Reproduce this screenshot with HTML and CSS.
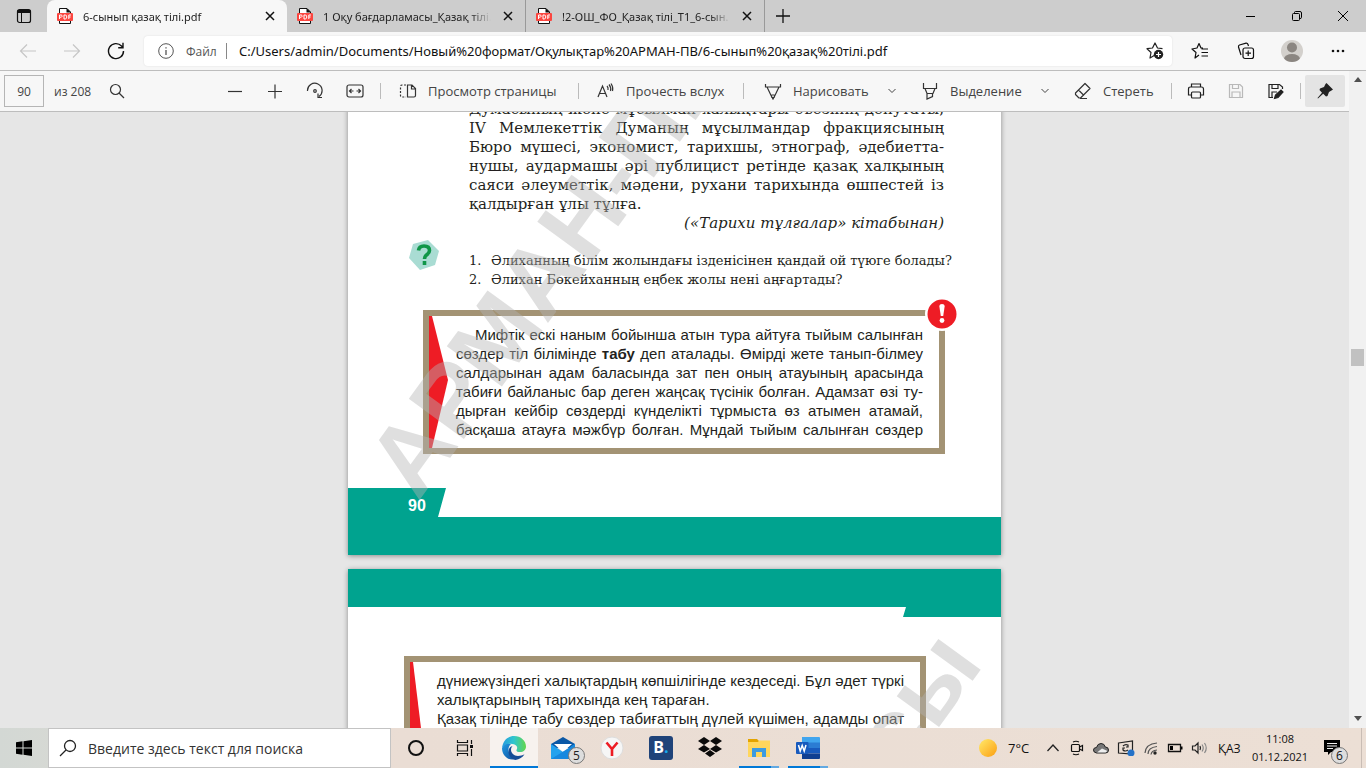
FILE: index.html
```html
<!DOCTYPE html>
<html lang="kk">
<head>
  <meta charset="UTF-8">
  <meta name="viewport" content="width=device-width, initial-scale=1.0">
  <title>6-сынып қазақ тілі.pdf</title>
  <link rel="stylesheet" href="styles.css">
</head>
<body>
  <svg width="0" height="0" class="defs">
    <symbol id="pdf" viewBox="0 0 16 16">
      <path d="M2.500 .5H10L13.500 4V15.500H2.500Z" fill="#fff" stroke="#111"/>
      <path d="M9.500 0V4.500H14Z" fill="#111"/>
      <rect x="0" y="5" width="16" height="8" rx="1" fill="#fb4640"/>
      <path d="M2.500 11V7H4.200Q5.300 7.200 5.200 8.300Q5 9.300 2.800 9.300M7 7V11H8.200Q9.800 10.800 9.800 9Q9.800 7 8.200 7ZM11.800 11V7H14M11.800 9H13.600" fill="none" stroke="#fff"/>
    </symbol>
    <symbol id="x" viewBox="0 0 10 10"><path d="M1 1 9 9M9 1 1 9" stroke="#111" stroke-width="1.500"/></symbol>
    <symbol id="chev" viewBox="0 0 10 10"><path d="M1.500 3 5 6.500 8.500 3" fill="none" stroke="#444"/></symbol>
  </svg>

  <header class="tabs">
    <button class="tab-actions" aria-label="Tab actions">
      <svg width="16" height="16" viewBox="0 0 16 16" fill="none" stroke="#111"><rect x="1.500" y="1.500" width="13" height="13" rx="2" stroke-width="1.200"/><path d="M1.500 3.500H14.500" stroke-width="3"/><path d="M5.500 5V14"/></svg>
    </button>
    <div class="tab active">
      <svg width="16" height="16"><use href="#pdf"/></svg>
      <span class="tab-title">6-сынып қазақ тілі.pdf</span>
      <button class="tab-close" aria-label="Close"><svg width="10" height="10"><use href="#x"/></svg></button>
    </div>
    <div class="tab">
      <svg width="16" height="16"><use href="#pdf"/></svg>
      <span class="tab-title">1 Оқу бағдарламасы_Қазақ тілі.</span>
      <button class="tab-close" aria-label="Close"><svg width="10" height="10"><use href="#x"/></svg></button>
    </div>
    <div class="tab">
      <svg width="16" height="16"><use href="#pdf"/></svg>
      <span class="tab-title">!2-ОШ_ФО_Қазақ тілі_Т1_6-сын.</span>
      <button class="tab-close" aria-label="Close"><svg width="10" height="10"><use href="#x"/></svg></button>
    </div>
    <button class="new-tab" aria-label="New tab"><svg width="14" height="14" viewBox="0 0 14 14"><path d="M7 0V14M0 7H14" stroke="#111" stroke-width="1.300"/></svg></button>
    <div class="window-buttons">
      <button aria-label="Minimize"><svg width="12" height="12" viewBox="0 0 12 12"><path d="M1 6.500H10" stroke="#000"/></svg></button>
      <button aria-label="Restore"><svg width="12" height="12" viewBox="0 0 12 12" fill="none" stroke="#000"><rect x="1.500" y="3.500" width="7" height="7" rx="1"/><path d="M3.500 3V2.500Q3.500 1.500 4.500 1.500H9Q10.500 1.500 10.500 3V7.500Q10.500 8.500 9 8.500"/></svg></button>
      <button aria-label="Close window"><svg width="12" height="12" viewBox="0 0 12 12"><path d="M1 1 11 11M11 1 1 11" stroke="#000"/></svg></button>
    </div>
  </header>

  <nav class="nav">
    <button aria-label="Back"><svg width="18" height="16" viewBox="0 0 18 16" fill="none" stroke="#c6c6c6" stroke-width="1.200"><path d="M17 8H1.500M8 1.500 1.500 8 8 14.500"/></svg></button>
    <button aria-label="Forward"><svg width="18" height="16" viewBox="0 0 18 16" fill="none" stroke="#c6c6c6" stroke-width="1.200"><path d="M1 8H16.500M10 1.500 16.500 8 10 14.500"/></svg></button>
    <button aria-label="Reload"><svg width="18" height="18" viewBox="0 0 18 18" fill="none" stroke="#111" stroke-width="1.400"><path d="M16.500 9A7.500 7.500 0 1 1 14.500 4L16 5.500M16 .8V5.700H11.200"/></svg></button>
    <div class="address">
      <svg width="16" height="16" viewBox="0 0 16 16" fill="none" stroke="#555"><circle cx="8" cy="8" r="7.300"/><path d="M8 7V12M8 4.200V5.600" stroke-width="1.300"/></svg>
      <label for="url">Файл</label>
      <input id="url" type="text" value="C:/Users/admin/Documents/Новый%20формат/Оқулықтар%20АРМАН-ПВ/6-сынып%20қазақ%20тілі.pdf">
      <button aria-label="Add to favorites"><svg width="18" height="18" viewBox="0 0 18 18"><path d="M9 13 4 16 5 10.500 1 6.700 6.500 6 9 1 11.500 6 16.500 6.700" fill="none" stroke="#222" stroke-width="1.200" stroke-linejoin="round"/><circle cx="12.500" cy="12.500" r="4.700" fill="#222"/><path d="M12.500 10V15M10 12.500H15" stroke="#fff" stroke-width="1.200"/></svg></button>
    </div>
    <div class="nav-right">
      <button aria-label="Favorites"><svg width="18" height="18" viewBox="0 0 18 18" fill="none" stroke="#111" stroke-width="1.200" stroke-linejoin="round"><path d="M8 13 4 16 5 10.500 1 7 6 6 8 1.500 10 6H12M10.500 7H17M10.500 10.500H17M10.500 14H17"/></svg></button>
      <button aria-label="Collections"><svg width="18" height="18" viewBox="0 0 18 18" fill="none" stroke="#111" stroke-width="1.200"><rect x="6" y="6" width="10.500" height="10.500" rx="2"/><path d="M11.200 8.500V14M8.500 11.200H14M4 13 1.500 5Q1.200 3.500 2.500 3L9 1.200Q10.500 1 11 2.500L11.500 4"/></svg></button>
      <button aria-label="Profile"><svg width="24" height="24" viewBox="0 0 24 24"><defs><clipPath id="round"><circle cx="12" cy="12" r="11"/></clipPath></defs><circle cx="12" cy="12" r="11" fill="#d3d0cc"/><g fill="#8b8681" clip-path="url(#round)"><circle cx="12" cy="8.500" r="5"/><ellipse cx="12" cy="20" rx="8" ry="5"/></g></svg></button>
      <button aria-label="Menu"><svg width="16" height="4" viewBox="0 0 16 4" fill="#111"><circle cx="3" cy="2" r="1.300"/><circle cx="8" cy="2" r="1.300"/><circle cx="13" cy="2" r="1.300"/></svg></button>
    </div>
  </nav>

  <main class="content">
    <div class="viewer">
      <div class="toolbar">
        <label class="page-label"><input type="text" value="90" aria-label="Page">из 208</label>
        <button class="find" aria-label="Find"><svg width="16" height="16" viewBox="0 0 16 16" fill="none" stroke="#333" stroke-width="1.200"><circle cx="6.500" cy="6.500" r="5"/><path d="M10 10 15 15"/></svg></button>
        <div class="zoom-tools">
          <button aria-label="Zoom out"><svg width="16" height="16" viewBox="0 0 16 16"><path d="M1 8.500H15" stroke="#333" stroke-width="1.200"/></svg></button>
          <button aria-label="Zoom in"><svg width="16" height="16" viewBox="0 0 16 16"><path d="M1 8.500H15M8 1.500V15.500" stroke="#333" stroke-width="1.200"/></svg></button>
          <button aria-label="Rotate"><svg width="18" height="18" viewBox="0 0 18 18" fill="none" stroke="#333" stroke-width="1.200"><path d="M1.500 9A7.300 7.300 0 1 1 13 14.500M16 15.500H12V11.500"/><circle cx="9" cy="9" r="1.300"/></svg></button>
          <button aria-label="Fit to width"><svg width="18" height="16" viewBox="0 0 18 16" fill="none" stroke="#333" stroke-width="1.200"><rect x="1" y="2" width="16" height="12" rx="2"/><path d="M7.500 8H3.500M10.500 8H14.500M5.500 6 3.500 8 5.500 10M12.500 6 14.500 8 12.500 10"/></svg></button>
        </div>
        <i class="sep"></i>
        <button class="tool view"><svg width="18" height="16" viewBox="0 0 18 16" fill="none" stroke="#333" stroke-width="1.200"><path d="M7 2H3Q1.500 2 1.500 3.500V12.500Q1.500 14 3 14H7" stroke-dasharray="2 1.500"/><path d="M8.500 2H13L16.500 5.500V12.500Q16.500 14 15 14H8.500ZM12.500 2V6H16.500"/></svg><span>Просмотр страницы</span></button>
        <i class="sep"></i>
        <button class="tool read"><svg width="18" height="16" viewBox="0 0 18 16" fill="none" stroke="#333" stroke-width="1.200"><path d="M1 14 5.500 3 10 14M2.500 10.500H8.500M10 3Q11.500 4.500 11 7M12 1.500Q14.500 4.500 13.500 8M14 .5Q16.500 4 15.500 8"/></svg><span>Прочесть вслух</span></button>
        <i class="sep"></i>
        <button class="tool draw"><svg width="18" height="18" viewBox="0 0 18 18" fill="none" stroke="#333" stroke-width="1.200"><path d="M1.500 2V5H16.500V2M3 5 8 15.500H10L15 5M7.500 13H10.500"/><path d="M8 15 9 17 10 15" fill="#333"/></svg><span>Нарисовать</span><svg width="10" height="10"><use href="#chev"/></svg></button>
        <button class="tool mark"><svg width="18" height="18" viewBox="0 0 18 18" fill="none" stroke="#333" stroke-width="1.200"><path d="M2.500 1V6.500H15.500V1M4 6.500 6 11.500H12L14 6.500M6 11.500V17L11.500 14.500V11.500"/></svg><span>Выделение</span><svg width="10" height="10"><use href="#chev"/></svg></button>
        <button class="tool erase"><svg width="18" height="18" viewBox="0 0 18 18" fill="none" stroke="#333" stroke-width="1.200" stroke-linejoin="round"><path d="M11 1.500 16 6.500 6.500 16H5L1.500 12.500V11ZM4.500 8 10 13.500M6 16.500H13"/></svg><span>Стереть</span></button>
        <i class="sep"></i>
        <div class="file-tools">
          <button aria-label="Print"><svg width="18" height="18" viewBox="0 0 18 18" fill="none" stroke="#222" stroke-width="1.200"><path d="M4.500 5V2H13.500V5M4.500 13H1.500V7Q1.500 5 3.500 5H14.500Q16.500 5 16.500 7V13H13.500"/><rect x="4.500" y="10" width="9" height="6" rx="1"/></svg></button>
          <button aria-label="Save" disabled><svg width="16" height="16" viewBox="0 0 16 16" fill="none" stroke="#b9b9b9" stroke-width="1.200"><path d="M1.500 1.500H12L14.500 4V14.500H1.500ZM4.500 1.500V5.500H10.500V1.500M4 14V9H12V14"/></svg></button>
          <button aria-label="Save as"><svg width="18" height="18" viewBox="0 0 18 18" fill="none" stroke="#222" stroke-width="1.200"><path d="M6 15.500H2V2.500H12.500L15.500 5V7M5 2.500V6.500H11V2.500M5 15V10H10"/><path d="M7.500 16.500 8.500 13 14 8 16 10 11 15.500Z" fill="#222"/></svg></button>
        </div>
        <i class="sep"></i>
        <button class="pin" aria-label="Pin toolbar"><svg width="18" height="18" viewBox="0 0 18 18"><path d="M10.500 1 17 7.500 15.500 8.500 13 10 11.500 14 10 14.500 7.200 11.800 2 16.500 1.500 16 6 10.800 3.500 8 4 6.500 8 5 9.500 2Z" fill="#222"/></svg></button>
      </div>

      <div class="pages">
        <article class="sheet first">
          <div class="watermark">АРМАН-ПВ</div>
          <section class="biography">
            <p>Думасының және мұсылман халықтары съезінің депутаты,</p>
            <p>IV Мемлекеттік Думаның мұсылмандар фракциясының</p>
            <p>Бюро мүшесі, экономист, тарихшы, этнограф, әдебиетта-</p>
            <p>нушы, аудармашы әрі публицист ретінде қазақ халқының</p>
            <p>саяси әлеуметтік, мәдени, рухани тарихында өшпестей із</p>
            <p class="last">қалдырған ұлы тұлға.</p>
            <p class="source">(«Тарихи тұлғалар» кітабынан)</p>
          </section>
          <section class="questions">
            <svg width="32" height="32" viewBox="0 0 32 32"><path d="M5 5 20 1 31 12 27 26 12 31 1 19Z" fill="#a9dcd3"/><path d="M10.500 11.500Q11 7 16 7Q21.500 7 21.500 11.500Q21.500 14 18.500 16Q16.500 17.500 16.500 20M16.500 22V26" fill="none" stroke="#0f9648" stroke-width="3.600"/></svg>
            <ol>
              <li><span class="number">1.</span><span>Әлиханның білім жолындағы ізденісінен қандай ой түюге болады?</span></li>
              <li><span class="number">2.</span><span>Әлихан Бөкейханның еңбек жолы нені аңғартады?</span></li>
            </ol>
          </section>
          <section class="rule">
            <svg class="arrow" width="19" height="132" viewBox="0 0 19 132"><path d="M0 0H3L19 64 3 132H0Z" fill="#ee1c25"/></svg>
            <svg class="alert" width="34" height="34" viewBox="0 0 34 34"><circle cx="17" cy="17" r="17" fill="#fff"/><circle cx="17" cy="17" r="14.500" fill="#ee1c25"/><path d="M14.300 9Q14.500 7 17 7Q19.500 7 19.700 9L18.200 19H15.800Z" fill="#fff"/><circle cx="17" cy="23.500" r="2.400" fill="#fff"/></svg>
            <p class="indent">Мифтік ескі наным бойынша атын тура айтуға тыйым салынған</p>
            <p>сөздер тіл білімінде <b>табу</b> деп аталады. Өмірді жете танып-білмеу</p>
            <p>салдарынан адам баласында зат пен оның атауының арасында</p>
            <p>табиғи байланыс бар деген жаңсақ түсінік болған. Адамзат өзі ту-</p>
            <p>дырған кейбір сөздерді күнделікті тұрмыста өз атымен атамай,</p>
            <p>басқаша атауға мәжбүр болған. Мұндай тыйым салынған сөздер</p>
          </section>
          <footer class="folio"><span>90</span></footer>
        </article>

        <article class="sheet second">
          <div class="watermark">баспасы</div>
          <div class="band"></div>
          <section class="rule">
            <svg class="arrow" width="19" height="132" viewBox="0 0 19 132"><path d="M0 0H3L19 132H0Z" fill="#ee1c25"/></svg>
            <p>дүниежүзіндегі халықтардың көпшілігінде кездеседі. Бұл әдет түркі</p>
            <p class="last">халықтарының тарихында кең тараған.</p>
            <p>Қазақ тілінде табу сөздер табиғаттың дүлей күшімен, адамды опат</p>
          </section>
        </article>
      </div>
    </div>
    <div class="scrollbar">
      <svg width="10" height="6" viewBox="0 0 10 6"><path d="M5 0 9 5H1Z" fill="#505050"/></svg>
      <span class="thumb"></span>
      <svg width="10" height="6" viewBox="0 0 10 6"><path d="M5 5 9 0H1Z" fill="#505050"/></svg>
    </div>
  </main>

  <footer class="taskbar">
    <button class="start" aria-label="Start"><svg width="16" height="16" viewBox="0 0 16 16"><path d="M0 2.200 6.500 1.300V7.500H0ZM7.500 1.200 16 0V7.500H7.500ZM0 8.500H6.500V14.700L0 13.800ZM7.500 8.500H16V16L7.500 14.800Z"/></svg></button>
    <label class="search">
      <svg width="18" height="18" viewBox="0 0 18 18" fill="none" stroke="#222" stroke-width="1.300"><circle cx="11" cy="7" r="5.500"/><path d="M7 11 1 17"/></svg>
      <input type="text" placeholder="Введите здесь текст для поиска">
    </label>
    <div class="apps">
      <button aria-label="Cortana"><svg width="18" height="18" viewBox="0 0 18 18"><circle cx="9" cy="9" r="7" fill="none" stroke="#111" stroke-width="2"/></svg></button>
      <button aria-label="Task view"><svg width="18" height="18" viewBox="0 0 18 18" fill="none" stroke="#111" stroke-width="1.200"><path d="M1.500 1V3.500H11.500V1M1.500 17V14.500H11.500V17M1.500 6H11.500V12H1.500ZM15.500 1V5M15.500 10V17"/><path d="M14 6H17V9H14Z" fill="#111" stroke="none"/></svg></button>
      <button class="open" aria-label="Edge"><svg width="24" height="24" viewBox="0 0 24 24"><defs><linearGradient id="edge-top" x1="0" x2="1"><stop offset="0" stop-color="#269bdf"/><stop offset=".5" stop-color="#31c6cd"/><stop offset="1" stop-color="#62d64a"/></linearGradient><linearGradient id="edge-low" x1="0" y1="0" x2="1" y2="1"><stop offset="0" stop-color="#219be2"/><stop offset="1" stop-color="#0c4a9b"/></linearGradient></defs><path d="M0 12C1 4 6 0 12 0C19 0 24 5 24 10.500C24 14 21.500 16 18 16C15.500 16 14 15 14.500 14C16 11.500 15 9.500 12 8.300C8 6.700 2 8 0 12Z" fill="url(#edge-top)"/><path d="M0 12C1.500 8.500 5 7 9 8C7.500 9 6.500 11 6.500 13.500C6.500 18 10 22 15 22.500C7 26 0 20 0 12Z" fill="url(#edge-low)"/><path d="M10.500 10C7 14 10 20 16 20C18.500 20 20.500 19.500 22.500 18.300C20.500 21.500 17.500 23.500 13.500 23.900C8 23 5.500 18 7 13C7.500 11.500 9 10.300 10.500 10Z" fill="#154c96"/></svg></button>
      <button aria-label="Mail"><svg width="26" height="24" viewBox="0 0 26 24"><path d="M1 8 13 1 25 8V12H1Z" fill="#0b58a6"/><path d="M4 8H22L13 16Z" fill="#fff"/><path d="M1 8 13 16 25 8V23H1Z" fill="#23a2ee"/><path d="M1 23 19 12 25 8V23Z" fill="#1688df"/></svg><span class="badge">5</span></button>
      <button aria-label="Yandex"><svg width="24" height="24" viewBox="0 0 24 24"><circle cx="12" cy="12" r="11" fill="#f6f6f6" stroke="#ddd"/><path d="M6.500 6.500 12 13 17.500 6.500M12 13V20" fill="none" stroke="#ed1c24" stroke-width="2.600"/></svg></button>
      <button aria-label="Booking"><span class="booking">B<i>.</i></span></button>
      <button aria-label="Dropbox"><svg width="24" height="22" viewBox="0 0 24 22"><path d="M6 0 12 4 6 8 0 4ZM18 0 24 4 18 8 12 4ZM6 8 12 12 6 15.500 0 12ZM18 8 24 12 18 15.500 12 12ZM12 13 17 16.500 12 20 7 16.500Z" fill="#0a0a0a"/></svg></button>
      <button class="running" aria-label="Explorer"><svg width="22" height="20" viewBox="0 0 22 20"><path d="M0 1H9L11 3V9H0Z" fill="#e3a400"/><path d="M0 4H10L11 2.500H22V19H0Z" fill="#ffd65c"/><path d="M4 19V10H18V19H14V14H8V19Z" fill="#3d9be0"/></svg></button>
      <button class="running" aria-label="Word"><svg width="24" height="22" viewBox="0 0 24 22"><path d="M6 0H23Q24 0 24 1V6H6Z" fill="#41a5ee"/><path d="M6 5.500H24V11H6Z" fill="#2b7cd3"/><path d="M6 11H24V16.500H6Z" fill="#185abd"/><path d="M6 16.500H24V21Q24 22 23 22H6Z" fill="#103f91"/><rect y="5" width="12.500" height="12" rx="1" fill="#185abd"/><path d="M2.500 8 4.200 14 6.200 8.500 8.200 14 10 8" fill="none" stroke="#fff" stroke-width="1.500"/></svg></button>
    </div>
    <div class="tray">
      <svg width="20" height="20" viewBox="0 0 20 20"><defs><linearGradient id="sun" x1="0" y1="0" x2="1" y2="1"><stop offset=".2" stop-color="#ffdb59"/><stop offset="1" stop-color="#fb9e10"/></linearGradient></defs><circle cx="10" cy="10" r="9" fill="url(#sun)"/></svg>
      <span class="temp">7°C</span>
      <div class="tray-icons">
        <svg width="16" height="16" viewBox="0 0 16 16"><path d="M2.500 11 8 5 13.500 11" fill="none" stroke="#222" stroke-width="1.300"/></svg>
        <svg width="16" height="16" viewBox="0 0 16 16" fill="none" stroke="#111" stroke-width="1.200"><rect x="2.500" y="4.500" width="8" height="7" rx="1"/><path d="M10.500 7 13.500 5.500V10.500L10.500 9M4 2Q7 .5 10 2M4 14Q7 15.500 10 14"/></svg>
        <svg width="16" height="16" viewBox="0 0 16 16"><path d="M3.500 13Q.5 12.500 .5 10Q.5 7.500 3.500 7.500Q4.500 3.500 8 3.500Q11.500 3.500 12.300 7Q15.500 7 15.500 10Q15.500 13 12.500 13Z" fill="#777" stroke="#222"/><path d="M4 12.500 9 8.500 14.500 11 12.500 12.500Z" fill="#eee"/></svg>
        <svg width="18" height="16" viewBox="0 0 18 16" fill="none" stroke="#222" stroke-width="1.200"><path d="M1.500 3 15.500 1V14L1.500 13ZM6 6Q8 4 11 5V7H9M11 10Q8 12 6 10V8H8"/><circle cx="14" cy="13" r="3.500" fill="#2472c8" stroke="none"/></svg>
        <svg width="16" height="16" viewBox="0 0 16 16" fill="none" stroke="#555" stroke-width="1.200"><path d="M2 13Q2.500 4 14 3M5 14Q5 7.500 14 6.500M8 14.500Q8.500 10.500 14 10"/><circle cx="12" cy="13" r="1.700" fill="#222" stroke="none"/></svg>
        <svg width="16" height="16" viewBox="0 0 16 16"><path d="M1.500 4.500H13.500V11.500H1.500Z" fill="none" stroke="#111" stroke-width="1.300"/><path d="M3 6H6V10H3ZM14 6.500H15.500V9.500H14Z"/></svg>
        <svg width="18" height="16" viewBox="0 0 18 16" fill="none" stroke="#222" stroke-width="1.200"><path d="M1.500 6H4L7 3V13L4 10H1.500ZM9 6Q10 8 9 10"/><path d="M11 4.500Q13.500 8 11 11.500M13.500 3Q17 8 13.500 13" stroke="#888"/></svg>
      </div>
      <span class="lang">ҚАЗ</span>
      <time class="clock">11:08<br>01.12.2021</time>
      <button class="notices" aria-label="Notifications"><svg width="18" height="18" viewBox="0 0 18 18"><path d="M1 1H17V13H8L5 16V13H1Z"/><path d="M4 4.500H14M4 7H14M4 9.500H10" stroke="#eee"/></svg><span class="badge">6</span></button>
    </div>
  </footer>
</body>
</html>
```
FILE: styles.css
```css
* {
  box-sizing: border-box;
}

body {
  margin: 0;
  height: 100vh;
  display: flex;
  flex-direction: column;
  overflow: hidden;
  font-family: "Open Sans", "Noto Sans", sans-serif;
  font-size: 13px;
  color: #222;
  background-color: #f7f7f7;
}

button {
  display: flex;
  align-items: center;
  justify-content: center;
  flex: none;
  padding: 0;
  border: none;
  background: none;
  font: inherit;
  color: inherit;
}

input {
  min-width: 0;
  border: none;
  outline: none;
  font: inherit;
  color: inherit;
}

p {
  margin: 0;
}

svg {
  display: block;
  flex: none;
}

.defs {
  position: absolute;
}

/* tab strip */
.tabs {
  display: flex;
  flex: none;
  height: 32px;
  background-color: #cdcdcd;
  font-family: "Noto Sans", sans-serif;
  font-size: 11px;
}

.tab-actions {
  width: 47px;
}

.tab {
  display: flex;
  align-items: center;
  width: 239px;
  padding: 0 10px;
  gap: 10px;
  border-right: 1px solid #999;
  background-clip: padding-box;
}

.tab.active {
  width: 240px;
  border: none;
  border-radius: 8px 8px 0 0;
  background-color: #f7f7f7;
}

.tab-title {
  flex: 1;
  overflow: hidden;
  white-space: nowrap;
  mask-image: linear-gradient(to right, #000 88%, transparent);
}

.tab-close {
  width: 14px;
}

.new-tab {
  width: 36px;
}

.window-buttons {
  display: flex;
  margin-left: auto;
}

.window-buttons button {
  width: 46px;
}

/* address row */
.nav {
  display: flex;
  flex: none;
  align-items: center;
  height: 39px;
  padding-left: 6px;
  border-bottom: 1px solid #bdbdbd;
}

.nav > button {
  width: 44px;
}

.address {
  display: flex;
  flex: 1;
  align-items: center;
  height: 30px;
  margin-left: 6px;
  padding: 0 8px 0 14px;
  gap: 12px;
  border-radius: 4px;
  background-color: #fff;
  box-shadow: 0 0 2px #ddd;
}

.address label {
  width: 28px;
  font-size: 12px;
  color: #555;
}

.address input {
  flex: 1;
  padding: 0 0 0 12px;
  height: 16px;
  border-left: 1px solid #888;
  font-family: "Noto Sans", sans-serif;
  color: #111;
}

.nav-right {
  display: flex;
  padding: 0 5px;
}

.nav-right button {
  width: 46px;
}

.content {
  display: flex;
  flex: 1;
  min-height: 0;
}

.viewer {
  display: flex;
  flex: 1;
  flex-direction: column;
  min-width: 0;
}

/* pdf toolbar */
.toolbar {
  display: flex;
  flex: none;
  align-items: center;
  height: 41px;
  padding: 0 4px;
  border-bottom: 1px solid #bdbdbd;
  color: #444;
  white-space: nowrap;
}

.page-label {
  display: flex;
  align-items: center;
  gap: 10px;
  width: 105px;
  font-size: 12px;
}

.page-label input {
  width: 40px;
  height: 32px;
  border: 1px solid #b5b5b5;
  background: none;
  text-align: center;
}

.zoom-tools {
  display: flex;
  margin-left: 90px;
}

.zoom-tools button,
.file-tools button {
  width: 40px;
}

.sep {
  width: 1px;
  height: 16px;
  flex: none;
  background-color: #bbb;
}

.zoom-tools + .sep {
  margin-left: 5px;
}

.tool {
  justify-content: flex-start;
  gap: 11px;
}

.tool span {
  flex: 1;
  text-align: left;
}

.view {
  width: 197px;
  padding-left: 18px;
}

.read {
  width: 164px;
  padding-left: 18px;
}

.draw {
  width: 157px;
  padding: 0 4px 0 20px;
}

.mark {
  width: 149px;
  padding-left: 20px;
}

.erase {
  width: 121px;
  padding-left: 24px;
}

.file-tools {
  display: flex;
  padding: 0 4px;
}

.pin {
  width: 40px;
  height: 32px;
  margin-left: auto;
  border-radius: 2px;
  background-color: #e4e4e4;
}

/* document */
.pages {
  flex: 1;
  min-height: 0;
  overflow: hidden;
  background-color: #e6e6e6;
  color: #231f20;
}

.sheet {
  position: relative;
  width: 653px;
  margin: 0 auto 14px;
  background-color: #fff;
  box-shadow: 0 1px 5px rgba(0, 0, 0, 0.4);
}

/* the view is scrolled part of a line down */
.sheet.first {
  margin-top: -12px;
}

.sheet p {
  line-height: 19px;
  text-align: justify;
  text-align-last: justify;
  white-space: nowrap;
}

.sheet p.last {
  text-align-last: left;
}

.watermark {
  position: absolute;
  z-index: 2;
  color: rgba(180, 180, 180, 0.43);
  font: bold 99px/99px "Liberation Sans", Arial, sans-serif;
  white-space: nowrap;
  transform: rotate(-54deg);
}

.first .watermark {
  left: 70px;
  top: 318px;
  transform-origin: 0 84px;
}

.second .watermark {
  right: 16px;
  top: 11px;
  transform-origin: 100% 84px;
}

.biography {
  padding: 0 57px 0 121px;
  font: 15px "DejaVu Serif", "Liberation Serif", serif;
}

.biography .source {
  font-style: italic;
  text-align-last: right;
}

.questions {
  display: flex;
  align-items: flex-start;
  gap: 29px;
  padding: 6px 57px 0 60px;
  font: 13px "DejaVu Serif", "Liberation Serif", serif;
}

.questions ol {
  flex: 1;
  margin: 0;
  padding: 12px 0 0;
  list-style: none;
  line-height: 19px;
  white-space: nowrap;
}

.questions li {
  display: flex;
}

.number {
  width: 22px;
}

.rule {
  position: relative;
  border: 6px solid #a39374;
  padding: 9px 16px 9px 27px;
  font: 15px "Liberation Sans", Arial, sans-serif;
}

.rule .indent {
  padding-left: 19px;
}

.first .rule {
  margin: 21px 56px 34px 75px;
}

.second .rule {
  margin: 39px 75px 0 56px;
}

.arrow {
  position: absolute;
  left: 0;
  top: 0;
}

.alert {
  position: absolute;
  right: -20px;
  top: -19px;
}

.folio {
  height: 67px;
  padding: 9px 0 0 60px;
  background-color: #00a38f;
  clip-path: polygon(0 0, 98px 0, 90px 29px, 100% 29px, 100% 100%, 0 100%);
  color: #fff;
  font: bold 16px "Liberation Sans", Arial, sans-serif;
}

.band {
  height: 48px;
  background-color: #00a38f;
  clip-path: polygon(0 0, 100% 0, 100% 100%, 555px 100%, 558px 38px, 0 38px);
}

.scrollbar {
  display: flex;
  flex: none;
  flex-direction: column;
  align-items: center;
  width: 17px;
  padding: 6px 0;
  background-color: #f1f1f1;
}

.thumb {
  width: 13px;
  height: 17px;
  margin: 266px 0 auto;
  background-color: #c1c1c1;
}

/* taskbar */
.taskbar {
  display: flex;
  flex: none;
  height: 40px;
  background: linear-gradient(to right, #d3d8d4, #eaddd4 400px, #ecdfd5);
}

.start {
  width: 48px;
}

.search {
  display: flex;
  align-items: center;
  width: 343px;
  padding: 0 10px;
  gap: 9px;
  border: 1px solid #c3c3c3;
  background-color: #fff;
  font-size: 14px;
}

.search input {
  flex: 1;
}

.search input::placeholder {
  color: #333;
}

.apps {
  display: flex;
  gap: 1px;
  margin-left: 1px;
}

.apps button {
  position: relative;
  width: 48px;
}

.apps .open {
  background-color: #f7f2ee;
  box-shadow: inset 0 -2px #0078d7;
}

.apps .running {
  background: linear-gradient(to right, #0078d7 32px, #62a9e2 32px) bottom / 40px 2px no-repeat;
}

.badge {
  position: absolute;
  right: 2px;
  bottom: 4px;
  width: 17px;
  height: 17px;
  border: 1px solid #777;
  border-radius: 50%;
  background-color: #ddd;
  font-size: 12px;
  line-height: 15px;
  text-align: center;
}

.booking {
  width: 24px;
  height: 24px;
  border-radius: 3px;
  background-color: #1f4379;
  color: #fff;
  font-size: 16px;
  font-weight: bold;
  line-height: 23px;
}

.booking i {
  color: #17a8ec;
  font-style: normal;
}

.tray {
  display: flex;
  align-items: center;
  margin: 0 4px 0 auto;
  border-right: 1px solid #c9bdb5;
  color: #111;
  font-size: 12px;
}

.temp {
  width: 37px;
  margin-left: 10px;
  font-size: 13px;
}

.tray-icons {
  display: flex;
  gap: 8px;
}

.lang {
  width: 34px;
  margin-left: 9px;
}

.clock {
  width: 56px;
  font-size: 11px;
  line-height: 18px;
  text-align: center;
}

.notices {
  position: relative;
  width: 48px;
  height: 40px;
  margin-right: 5px;
}

.notices .badge {
  right: 8px;
}
```
